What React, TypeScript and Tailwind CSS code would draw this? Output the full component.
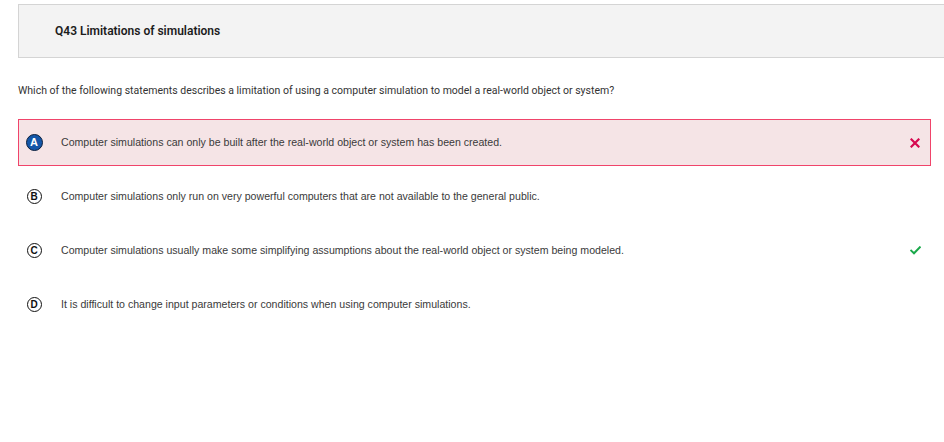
const options = [
  {
    letter: "A",
    text: "Computer simulations can only be built after the real-world object or system has been created.",
    selected: true,
    mark: "wrong",
  },
  {
    letter: "B",
    text: "Computer simulations only run on very powerful computers that are not available to the general public.",
  },
  {
    letter: "C",
    text: "Computer simulations usually make some simplifying assumptions about the real-world object or system being modeled.",
    mark: "right",
  },
  {
    letter: "D",
    text: "It is difficult to change input parameters or conditions when using computer simulations.",
  },
];

function Cross() {
  return (
    <svg width="10" height="10" viewBox="0 0 10 10" fill="none">
      <path d="M1.5 1.5L8.5 8.5M8.5 1.5L1.5 8.5" stroke="#d6084f" strokeWidth="2.2" strokeLinecap="square" />
    </svg>
  );
}

function Check() {
  return (
    <svg width="11" height="9" viewBox="0 0 11 9" fill="none">
      <path d="M1.2 4.6L4 7.3L9.8 1.3" stroke="#19a84a" strokeWidth="2" strokeLinecap="square" />
    </svg>
  );
}

export default function App() {
  return (
    <div className="w-[944px] h-[442px] bg-white pt-[4px] font-['Roboto',sans-serif] text-[#222]">
      {/* Header */}
      <div className="ml-[18px] h-[54px] flex items-center pl-[36px] bg-[#f3f3f3] border border-r-0 border-[#d4d4d4]">
        <span className="text-[12px] font-semibold text-[#1c1c1c]">Q43 Limitations of simulations</span>
      </div>

      <p className="ml-[18px] mt-[27px] text-[10.5px] leading-[12px] text-[#333]">
        Which of the following statements describes a limitation of using a computer simulation to model a real-world
        object or system?
      </p>

      {/* Options */}
      <div className="mt-[22px] ml-[18px] w-[913px] flex flex-col gap-[7px]">
        {options.map((o) => (
          <div
            key={o.letter}
            className={`h-[47px] flex items-center pl-[6px] pr-[9px] border ${
              o.selected ? "bg-[#f5e4e6] border-[#f0446a]" : "border-transparent"
            }`}
          >
            <div className="w-[18px] flex justify-center">
              {o.selected ? (
                <span className="w-[17px] h-[17px] rounded-full bg-[#1456a8] border border-[#0c1f3c] flex items-center justify-center text-white text-[11px] font-bold font-['Liberation_Sans',sans-serif]">
                  {o.letter}
                </span>
              ) : (
                <span className="w-[15px] h-[15px] rounded-full border-[1.5px] border-[#111] flex items-center justify-center text-[#111] text-[10px] font-bold font-['Liberation_Sans',sans-serif]">
                  {o.letter}
                </span>
              )}
            </div>
            <span className="ml-[18px] flex-1 text-[10.6px] text-[#3a3a3a] font-['Liberation_Sans',sans-serif]">
              {o.text}
            </span>
            <div className="w-[12px] flex justify-center">
              {o.mark === "wrong" && <Cross />}
              {o.mark === "right" && <Check />}
            </div>
          </div>
        ))}
      </div>
    </div>
  );
}
